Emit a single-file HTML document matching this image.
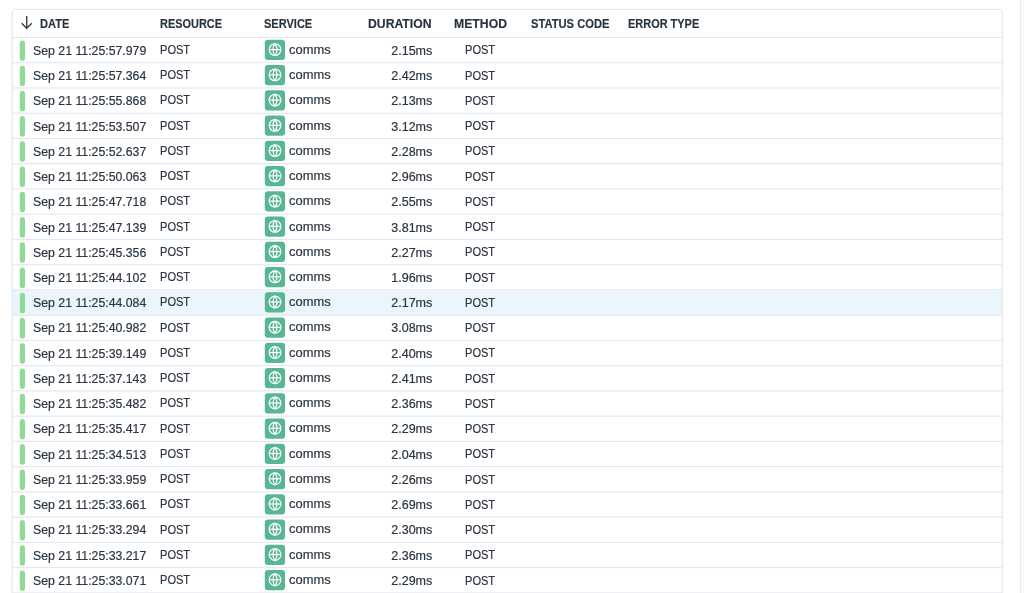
<!DOCTYPE html><html><head><meta charset="utf-8"><style>
html,body{margin:0;padding:0;background:#fff;width:1024px;height:593px;overflow:hidden;position:relative;font-family:"Liberation Sans",sans-serif;}
#wrap{position:absolute;left:0;top:0;width:1024px;height:593px;will-change:transform;}
.t{position:absolute;white-space:nowrap;font-size:12.3px;color:#2b3640;line-height:16px;transform-origin:0 0;-webkit-text-stroke:0.2px #2b3640;}
.r{transform-origin:100% 0;}
.h{position:absolute;white-space:nowrap;font-size:12.6px;color:#26333d;font-weight:bold;line-height:16px;transform-origin:0 0;-webkit-text-stroke:0.15px #26333d;}
.ic{position:absolute;left:265px;width:20px;height:20px;}
</style></head><body><div id="wrap">

<svg style="position:absolute;left:0;top:0" width="1024" height="593" viewBox="0 0 1024 593"><rect x="1020" y="0" width="1.1" height="593" fill="#e4e6ec"/><rect x="1021.1" y="0" width="2.9" height="593" fill="#f8f9fb"/><rect x="13" y="290.410" width="989.5" height="24.745" fill="#ebf5fc"/><rect x="12.2" y="9.3" width="990.2" height="620" rx="4" ry="4" fill="none" stroke="#e5e8ef" stroke-width="1.3"/><rect x="13" y="36.960" width="989.5" height="1.05" fill="#e3e6ee"/><rect x="13" y="62.205" width="989.5" height="1.05" fill="#e3e6ee"/><rect x="13" y="87.450" width="989.5" height="1.05" fill="#e3e6ee"/><rect x="13" y="112.695" width="989.5" height="1.05" fill="#e3e6ee"/><rect x="13" y="137.940" width="989.5" height="1.05" fill="#e3e6ee"/><rect x="13" y="163.185" width="989.5" height="1.05" fill="#e3e6ee"/><rect x="13" y="188.430" width="989.5" height="1.05" fill="#e3e6ee"/><rect x="13" y="213.675" width="989.5" height="1.05" fill="#e3e6ee"/><rect x="13" y="238.920" width="989.5" height="1.05" fill="#e3e6ee"/><rect x="13" y="264.165" width="989.5" height="1.05" fill="#e3e6ee"/><rect x="13" y="289.410" width="989.5" height="1.05" fill="#e3e6ee"/><rect x="13" y="314.655" width="989.5" height="1.05" fill="#e3e6ee"/><rect x="13" y="339.900" width="989.5" height="1.05" fill="#e3e6ee"/><rect x="13" y="365.145" width="989.5" height="1.05" fill="#e3e6ee"/><rect x="13" y="390.390" width="989.5" height="1.05" fill="#e3e6ee"/><rect x="13" y="415.635" width="989.5" height="1.05" fill="#e3e6ee"/><rect x="13" y="440.880" width="989.5" height="1.05" fill="#e3e6ee"/><rect x="13" y="466.125" width="989.5" height="1.05" fill="#e3e6ee"/><rect x="13" y="491.370" width="989.5" height="1.05" fill="#e3e6ee"/><rect x="13" y="516.615" width="989.5" height="1.05" fill="#e3e6ee"/><rect x="13" y="541.860" width="989.5" height="1.05" fill="#e3e6ee"/><rect x="13" y="567.105" width="989.5" height="1.05" fill="#e3e6ee"/><rect x="13" y="592.350" width="989.5" height="1.05" fill="#e3e6ee"/><rect x="19.8" y="40.383" width="5.2" height="20.4" rx="2.6" fill="#8fda99"/><rect x="19.8" y="65.627" width="5.2" height="20.4" rx="2.6" fill="#8fda99"/><rect x="19.8" y="90.873" width="5.2" height="20.4" rx="2.6" fill="#8fda99"/><rect x="19.8" y="116.117" width="5.2" height="20.4" rx="2.6" fill="#8fda99"/><rect x="19.8" y="141.363" width="5.2" height="20.4" rx="2.6" fill="#8fda99"/><rect x="19.8" y="166.608" width="5.2" height="20.4" rx="2.6" fill="#8fda99"/><rect x="19.8" y="191.853" width="5.2" height="20.4" rx="2.6" fill="#8fda99"/><rect x="19.8" y="217.098" width="5.2" height="20.4" rx="2.6" fill="#8fda99"/><rect x="19.8" y="242.343" width="5.2" height="20.4" rx="2.6" fill="#8fda99"/><rect x="19.8" y="267.588" width="5.2" height="20.4" rx="2.6" fill="#8fda99"/><rect x="19.8" y="292.833" width="5.2" height="20.4" rx="2.6" fill="#8fda99"/><rect x="19.8" y="318.077" width="5.2" height="20.4" rx="2.6" fill="#8fda99"/><rect x="19.8" y="343.322" width="5.2" height="20.4" rx="2.6" fill="#8fda99"/><rect x="19.8" y="368.567" width="5.2" height="20.4" rx="2.6" fill="#8fda99"/><rect x="19.8" y="393.812" width="5.2" height="20.4" rx="2.6" fill="#8fda99"/><rect x="19.8" y="419.058" width="5.2" height="20.4" rx="2.6" fill="#8fda99"/><rect x="19.8" y="444.303" width="5.2" height="20.4" rx="2.6" fill="#8fda99"/><rect x="19.8" y="469.548" width="5.2" height="20.4" rx="2.6" fill="#8fda99"/><rect x="19.8" y="494.793" width="5.2" height="20.4" rx="2.6" fill="#8fda99"/><rect x="19.8" y="520.037" width="5.2" height="20.4" rx="2.6" fill="#8fda99"/><rect x="19.8" y="545.282" width="5.2" height="20.4" rx="2.6" fill="#8fda99"/><rect x="19.8" y="570.527" width="5.2" height="20.4" rx="2.6" fill="#8fda99"/><g transform="translate(264.8,39.860)"><rect x="0" y="0" width="20.25" height="20.25" rx="3.3" fill="#59b692"/><g fill="none" stroke="#fff" stroke-width="1.2"><circle cx="10.2" cy="9.75" r="5.85"/><line x1="4.3" y1="9.75" x2="16.1" y2="9.75"/><path d="M10.2 3.9 C7.6 6.7 7.6 12.8 10.2 15.6 C12.8 12.8 12.8 6.7 10.2 3.9Z"/></g></g><g transform="translate(264.8,65.105)"><rect x="0" y="0" width="20.25" height="20.25" rx="3.3" fill="#59b692"/><g fill="none" stroke="#fff" stroke-width="1.2"><circle cx="10.2" cy="9.75" r="5.85"/><line x1="4.3" y1="9.75" x2="16.1" y2="9.75"/><path d="M10.2 3.9 C7.6 6.7 7.6 12.8 10.2 15.6 C12.8 12.8 12.8 6.7 10.2 3.9Z"/></g></g><g transform="translate(264.8,90.350)"><rect x="0" y="0" width="20.25" height="20.25" rx="3.3" fill="#59b692"/><g fill="none" stroke="#fff" stroke-width="1.2"><circle cx="10.2" cy="9.75" r="5.85"/><line x1="4.3" y1="9.75" x2="16.1" y2="9.75"/><path d="M10.2 3.9 C7.6 6.7 7.6 12.8 10.2 15.6 C12.8 12.8 12.8 6.7 10.2 3.9Z"/></g></g><g transform="translate(264.8,115.595)"><rect x="0" y="0" width="20.25" height="20.25" rx="3.3" fill="#59b692"/><g fill="none" stroke="#fff" stroke-width="1.2"><circle cx="10.2" cy="9.75" r="5.85"/><line x1="4.3" y1="9.75" x2="16.1" y2="9.75"/><path d="M10.2 3.9 C7.6 6.7 7.6 12.8 10.2 15.6 C12.8 12.8 12.8 6.7 10.2 3.9Z"/></g></g><g transform="translate(264.8,140.840)"><rect x="0" y="0" width="20.25" height="20.25" rx="3.3" fill="#59b692"/><g fill="none" stroke="#fff" stroke-width="1.2"><circle cx="10.2" cy="9.75" r="5.85"/><line x1="4.3" y1="9.75" x2="16.1" y2="9.75"/><path d="M10.2 3.9 C7.6 6.7 7.6 12.8 10.2 15.6 C12.8 12.8 12.8 6.7 10.2 3.9Z"/></g></g><g transform="translate(264.8,166.085)"><rect x="0" y="0" width="20.25" height="20.25" rx="3.3" fill="#59b692"/><g fill="none" stroke="#fff" stroke-width="1.2"><circle cx="10.2" cy="9.75" r="5.85"/><line x1="4.3" y1="9.75" x2="16.1" y2="9.75"/><path d="M10.2 3.9 C7.6 6.7 7.6 12.8 10.2 15.6 C12.8 12.8 12.8 6.7 10.2 3.9Z"/></g></g><g transform="translate(264.8,191.330)"><rect x="0" y="0" width="20.25" height="20.25" rx="3.3" fill="#59b692"/><g fill="none" stroke="#fff" stroke-width="1.2"><circle cx="10.2" cy="9.75" r="5.85"/><line x1="4.3" y1="9.75" x2="16.1" y2="9.75"/><path d="M10.2 3.9 C7.6 6.7 7.6 12.8 10.2 15.6 C12.8 12.8 12.8 6.7 10.2 3.9Z"/></g></g><g transform="translate(264.8,216.575)"><rect x="0" y="0" width="20.25" height="20.25" rx="3.3" fill="#59b692"/><g fill="none" stroke="#fff" stroke-width="1.2"><circle cx="10.2" cy="9.75" r="5.85"/><line x1="4.3" y1="9.75" x2="16.1" y2="9.75"/><path d="M10.2 3.9 C7.6 6.7 7.6 12.8 10.2 15.6 C12.8 12.8 12.8 6.7 10.2 3.9Z"/></g></g><g transform="translate(264.8,241.820)"><rect x="0" y="0" width="20.25" height="20.25" rx="3.3" fill="#59b692"/><g fill="none" stroke="#fff" stroke-width="1.2"><circle cx="10.2" cy="9.75" r="5.85"/><line x1="4.3" y1="9.75" x2="16.1" y2="9.75"/><path d="M10.2 3.9 C7.6 6.7 7.6 12.8 10.2 15.6 C12.8 12.8 12.8 6.7 10.2 3.9Z"/></g></g><g transform="translate(264.8,267.065)"><rect x="0" y="0" width="20.25" height="20.25" rx="3.3" fill="#59b692"/><g fill="none" stroke="#fff" stroke-width="1.2"><circle cx="10.2" cy="9.75" r="5.85"/><line x1="4.3" y1="9.75" x2="16.1" y2="9.75"/><path d="M10.2 3.9 C7.6 6.7 7.6 12.8 10.2 15.6 C12.8 12.8 12.8 6.7 10.2 3.9Z"/></g></g><g transform="translate(264.8,292.310)"><rect x="0" y="0" width="20.25" height="20.25" rx="3.3" fill="#59b692"/><g fill="none" stroke="#fff" stroke-width="1.2"><circle cx="10.2" cy="9.75" r="5.85"/><line x1="4.3" y1="9.75" x2="16.1" y2="9.75"/><path d="M10.2 3.9 C7.6 6.7 7.6 12.8 10.2 15.6 C12.8 12.8 12.8 6.7 10.2 3.9Z"/></g></g><g transform="translate(264.8,317.555)"><rect x="0" y="0" width="20.25" height="20.25" rx="3.3" fill="#59b692"/><g fill="none" stroke="#fff" stroke-width="1.2"><circle cx="10.2" cy="9.75" r="5.85"/><line x1="4.3" y1="9.75" x2="16.1" y2="9.75"/><path d="M10.2 3.9 C7.6 6.7 7.6 12.8 10.2 15.6 C12.8 12.8 12.8 6.7 10.2 3.9Z"/></g></g><g transform="translate(264.8,342.800)"><rect x="0" y="0" width="20.25" height="20.25" rx="3.3" fill="#59b692"/><g fill="none" stroke="#fff" stroke-width="1.2"><circle cx="10.2" cy="9.75" r="5.85"/><line x1="4.3" y1="9.75" x2="16.1" y2="9.75"/><path d="M10.2 3.9 C7.6 6.7 7.6 12.8 10.2 15.6 C12.8 12.8 12.8 6.7 10.2 3.9Z"/></g></g><g transform="translate(264.8,368.045)"><rect x="0" y="0" width="20.25" height="20.25" rx="3.3" fill="#59b692"/><g fill="none" stroke="#fff" stroke-width="1.2"><circle cx="10.2" cy="9.75" r="5.85"/><line x1="4.3" y1="9.75" x2="16.1" y2="9.75"/><path d="M10.2 3.9 C7.6 6.7 7.6 12.8 10.2 15.6 C12.8 12.8 12.8 6.7 10.2 3.9Z"/></g></g><g transform="translate(264.8,393.290)"><rect x="0" y="0" width="20.25" height="20.25" rx="3.3" fill="#59b692"/><g fill="none" stroke="#fff" stroke-width="1.2"><circle cx="10.2" cy="9.75" r="5.85"/><line x1="4.3" y1="9.75" x2="16.1" y2="9.75"/><path d="M10.2 3.9 C7.6 6.7 7.6 12.8 10.2 15.6 C12.8 12.8 12.8 6.7 10.2 3.9Z"/></g></g><g transform="translate(264.8,418.535)"><rect x="0" y="0" width="20.25" height="20.25" rx="3.3" fill="#59b692"/><g fill="none" stroke="#fff" stroke-width="1.2"><circle cx="10.2" cy="9.75" r="5.85"/><line x1="4.3" y1="9.75" x2="16.1" y2="9.75"/><path d="M10.2 3.9 C7.6 6.7 7.6 12.8 10.2 15.6 C12.8 12.8 12.8 6.7 10.2 3.9Z"/></g></g><g transform="translate(264.8,443.780)"><rect x="0" y="0" width="20.25" height="20.25" rx="3.3" fill="#59b692"/><g fill="none" stroke="#fff" stroke-width="1.2"><circle cx="10.2" cy="9.75" r="5.85"/><line x1="4.3" y1="9.75" x2="16.1" y2="9.75"/><path d="M10.2 3.9 C7.6 6.7 7.6 12.8 10.2 15.6 C12.8 12.8 12.8 6.7 10.2 3.9Z"/></g></g><g transform="translate(264.8,469.025)"><rect x="0" y="0" width="20.25" height="20.25" rx="3.3" fill="#59b692"/><g fill="none" stroke="#fff" stroke-width="1.2"><circle cx="10.2" cy="9.75" r="5.85"/><line x1="4.3" y1="9.75" x2="16.1" y2="9.75"/><path d="M10.2 3.9 C7.6 6.7 7.6 12.8 10.2 15.6 C12.8 12.8 12.8 6.7 10.2 3.9Z"/></g></g><g transform="translate(264.8,494.270)"><rect x="0" y="0" width="20.25" height="20.25" rx="3.3" fill="#59b692"/><g fill="none" stroke="#fff" stroke-width="1.2"><circle cx="10.2" cy="9.75" r="5.85"/><line x1="4.3" y1="9.75" x2="16.1" y2="9.75"/><path d="M10.2 3.9 C7.6 6.7 7.6 12.8 10.2 15.6 C12.8 12.8 12.8 6.7 10.2 3.9Z"/></g></g><g transform="translate(264.8,519.515)"><rect x="0" y="0" width="20.25" height="20.25" rx="3.3" fill="#59b692"/><g fill="none" stroke="#fff" stroke-width="1.2"><circle cx="10.2" cy="9.75" r="5.85"/><line x1="4.3" y1="9.75" x2="16.1" y2="9.75"/><path d="M10.2 3.9 C7.6 6.7 7.6 12.8 10.2 15.6 C12.8 12.8 12.8 6.7 10.2 3.9Z"/></g></g><g transform="translate(264.8,544.760)"><rect x="0" y="0" width="20.25" height="20.25" rx="3.3" fill="#59b692"/><g fill="none" stroke="#fff" stroke-width="1.2"><circle cx="10.2" cy="9.75" r="5.85"/><line x1="4.3" y1="9.75" x2="16.1" y2="9.75"/><path d="M10.2 3.9 C7.6 6.7 7.6 12.8 10.2 15.6 C12.8 12.8 12.8 6.7 10.2 3.9Z"/></g></g><g transform="translate(264.8,570.005)"><rect x="0" y="0" width="20.25" height="20.25" rx="3.3" fill="#59b692"/><g fill="none" stroke="#fff" stroke-width="1.2"><circle cx="10.2" cy="9.75" r="5.85"/><line x1="4.3" y1="9.75" x2="16.1" y2="9.75"/><path d="M10.2 3.9 C7.6 6.7 7.6 12.8 10.2 15.6 C12.8 12.8 12.8 6.7 10.2 3.9Z"/></g></g></svg>
<svg style="position:absolute;left:20px;top:15px" width="14" height="15" viewBox="0 0 14 15"><g fill="none" stroke="#333f49" stroke-width="1.4"><line x1="6.7" y1="1" x2="6.7" y2="13.5"/><polyline points="1.6,8.3 6.7,13.3 11.8,8.3"/></g></svg>
<div class="h" style="left:39.7px;top:15.6px;transform:scaleX(0.880)">DATE</div>
<div class="h" style="left:159.8px;top:15.6px;transform:scaleX(0.869)">RESOURCE</div>
<div class="h" style="left:263.9px;top:15.6px;transform:scaleX(0.876)">SERVICE</div>
<div class="h" style="left:368.4px;top:15.6px;transform:scaleX(0.969)">DURATION</div>
<div class="h" style="left:453.8px;top:15.6px;transform:scaleX(0.972)">METHOD</div>
<div class="h" style="left:530.8px;top:15.6px;transform:scaleX(0.887)">STATUS CODE</div>
<div class="h" style="left:627.9px;top:15.6px;transform:scaleX(0.870)">ERROR TYPE</div>
<div class="t" style="left:33px;top:42.78px;transform:scaleX(1.000)">Sep 21 11:25:57.979</div>
<div class="t" style="left:160.4px;top:41.88px;transform:scaleX(0.900)">POST</div>
<div class="t" style="left:289px;top:41.78px;transform:scaleX(1.050)">comms</div>
<div class="t r" style="right:591.8px;top:42.78px;transform:scaleX(1.020)">2.15ms</div>
<div class="t" style="left:464.6px;top:42.48px;transform:scaleX(0.900)">POST</div>
<div class="t" style="left:33px;top:68.03px;transform:scaleX(1.000)">Sep 21 11:25:57.364</div>
<div class="t" style="left:160.4px;top:67.13px;transform:scaleX(0.900)">POST</div>
<div class="t" style="left:289px;top:67.03px;transform:scaleX(1.050)">comms</div>
<div class="t r" style="right:591.8px;top:68.03px;transform:scaleX(1.020)">2.42ms</div>
<div class="t" style="left:464.6px;top:67.73px;transform:scaleX(0.900)">POST</div>
<div class="t" style="left:33px;top:93.27px;transform:scaleX(1.000)">Sep 21 11:25:55.868</div>
<div class="t" style="left:160.4px;top:92.37px;transform:scaleX(0.900)">POST</div>
<div class="t" style="left:289px;top:92.27px;transform:scaleX(1.050)">comms</div>
<div class="t r" style="right:591.8px;top:93.27px;transform:scaleX(1.020)">2.13ms</div>
<div class="t" style="left:464.6px;top:92.97px;transform:scaleX(0.900)">POST</div>
<div class="t" style="left:33px;top:118.52px;transform:scaleX(1.000)">Sep 21 11:25:53.507</div>
<div class="t" style="left:160.4px;top:117.62px;transform:scaleX(0.900)">POST</div>
<div class="t" style="left:289px;top:117.52px;transform:scaleX(1.050)">comms</div>
<div class="t r" style="right:591.8px;top:118.52px;transform:scaleX(1.020)">3.12ms</div>
<div class="t" style="left:464.6px;top:118.22px;transform:scaleX(0.900)">POST</div>
<div class="t" style="left:33px;top:143.76px;transform:scaleX(1.000)">Sep 21 11:25:52.637</div>
<div class="t" style="left:160.4px;top:142.86px;transform:scaleX(0.900)">POST</div>
<div class="t" style="left:289px;top:142.76px;transform:scaleX(1.050)">comms</div>
<div class="t r" style="right:591.8px;top:143.76px;transform:scaleX(1.020)">2.28ms</div>
<div class="t" style="left:464.6px;top:143.46px;transform:scaleX(0.900)">POST</div>
<div class="t" style="left:33px;top:169.01px;transform:scaleX(1.000)">Sep 21 11:25:50.063</div>
<div class="t" style="left:160.4px;top:168.11px;transform:scaleX(0.900)">POST</div>
<div class="t" style="left:289px;top:168.01px;transform:scaleX(1.050)">comms</div>
<div class="t r" style="right:591.8px;top:169.01px;transform:scaleX(1.020)">2.96ms</div>
<div class="t" style="left:464.6px;top:168.71px;transform:scaleX(0.900)">POST</div>
<div class="t" style="left:33px;top:194.25px;transform:scaleX(1.000)">Sep 21 11:25:47.718</div>
<div class="t" style="left:160.4px;top:193.35px;transform:scaleX(0.900)">POST</div>
<div class="t" style="left:289px;top:193.25px;transform:scaleX(1.050)">comms</div>
<div class="t r" style="right:591.8px;top:194.25px;transform:scaleX(1.020)">2.55ms</div>
<div class="t" style="left:464.6px;top:193.95px;transform:scaleX(0.900)">POST</div>
<div class="t" style="left:33px;top:219.50px;transform:scaleX(1.000)">Sep 21 11:25:47.139</div>
<div class="t" style="left:160.4px;top:218.60px;transform:scaleX(0.900)">POST</div>
<div class="t" style="left:289px;top:218.50px;transform:scaleX(1.050)">comms</div>
<div class="t r" style="right:591.8px;top:219.50px;transform:scaleX(1.020)">3.81ms</div>
<div class="t" style="left:464.6px;top:219.20px;transform:scaleX(0.900)">POST</div>
<div class="t" style="left:33px;top:244.74px;transform:scaleX(1.000)">Sep 21 11:25:45.356</div>
<div class="t" style="left:160.4px;top:243.84px;transform:scaleX(0.900)">POST</div>
<div class="t" style="left:289px;top:243.74px;transform:scaleX(1.050)">comms</div>
<div class="t r" style="right:591.8px;top:244.74px;transform:scaleX(1.020)">2.27ms</div>
<div class="t" style="left:464.6px;top:244.44px;transform:scaleX(0.900)">POST</div>
<div class="t" style="left:33px;top:269.99px;transform:scaleX(1.000)">Sep 21 11:25:44.102</div>
<div class="t" style="left:160.4px;top:269.09px;transform:scaleX(0.900)">POST</div>
<div class="t" style="left:289px;top:268.99px;transform:scaleX(1.050)">comms</div>
<div class="t r" style="right:591.8px;top:269.99px;transform:scaleX(1.020)">1.96ms</div>
<div class="t" style="left:464.6px;top:269.69px;transform:scaleX(0.900)">POST</div>
<div class="t" style="left:33px;top:295.23px;transform:scaleX(1.000)">Sep 21 11:25:44.084</div>
<div class="t" style="left:160.4px;top:294.33px;transform:scaleX(0.900)">POST</div>
<div class="t" style="left:289px;top:294.23px;transform:scaleX(1.050)">comms</div>
<div class="t r" style="right:591.8px;top:295.23px;transform:scaleX(1.020)">2.17ms</div>
<div class="t" style="left:464.6px;top:294.93px;transform:scaleX(0.900)">POST</div>
<div class="t" style="left:33px;top:320.48px;transform:scaleX(1.000)">Sep 21 11:25:40.982</div>
<div class="t" style="left:160.4px;top:319.58px;transform:scaleX(0.900)">POST</div>
<div class="t" style="left:289px;top:319.48px;transform:scaleX(1.050)">comms</div>
<div class="t r" style="right:591.8px;top:320.48px;transform:scaleX(1.020)">3.08ms</div>
<div class="t" style="left:464.6px;top:320.18px;transform:scaleX(0.900)">POST</div>
<div class="t" style="left:33px;top:345.72px;transform:scaleX(1.000)">Sep 21 11:25:39.149</div>
<div class="t" style="left:160.4px;top:344.82px;transform:scaleX(0.900)">POST</div>
<div class="t" style="left:289px;top:344.72px;transform:scaleX(1.050)">comms</div>
<div class="t r" style="right:591.8px;top:345.72px;transform:scaleX(1.020)">2.40ms</div>
<div class="t" style="left:464.6px;top:345.42px;transform:scaleX(0.900)">POST</div>
<div class="t" style="left:33px;top:370.97px;transform:scaleX(1.000)">Sep 21 11:25:37.143</div>
<div class="t" style="left:160.4px;top:370.07px;transform:scaleX(0.900)">POST</div>
<div class="t" style="left:289px;top:369.97px;transform:scaleX(1.050)">comms</div>
<div class="t r" style="right:591.8px;top:370.97px;transform:scaleX(1.020)">2.41ms</div>
<div class="t" style="left:464.6px;top:370.67px;transform:scaleX(0.900)">POST</div>
<div class="t" style="left:33px;top:396.21px;transform:scaleX(1.000)">Sep 21 11:25:35.482</div>
<div class="t" style="left:160.4px;top:395.31px;transform:scaleX(0.900)">POST</div>
<div class="t" style="left:289px;top:395.21px;transform:scaleX(1.050)">comms</div>
<div class="t r" style="right:591.8px;top:396.21px;transform:scaleX(1.020)">2.36ms</div>
<div class="t" style="left:464.6px;top:395.91px;transform:scaleX(0.900)">POST</div>
<div class="t" style="left:33px;top:421.46px;transform:scaleX(1.000)">Sep 21 11:25:35.417</div>
<div class="t" style="left:160.4px;top:420.56px;transform:scaleX(0.900)">POST</div>
<div class="t" style="left:289px;top:420.46px;transform:scaleX(1.050)">comms</div>
<div class="t r" style="right:591.8px;top:421.46px;transform:scaleX(1.020)">2.29ms</div>
<div class="t" style="left:464.6px;top:421.16px;transform:scaleX(0.900)">POST</div>
<div class="t" style="left:33px;top:446.70px;transform:scaleX(1.000)">Sep 21 11:25:34.513</div>
<div class="t" style="left:160.4px;top:445.80px;transform:scaleX(0.900)">POST</div>
<div class="t" style="left:289px;top:445.70px;transform:scaleX(1.050)">comms</div>
<div class="t r" style="right:591.8px;top:446.70px;transform:scaleX(1.020)">2.04ms</div>
<div class="t" style="left:464.6px;top:446.40px;transform:scaleX(0.900)">POST</div>
<div class="t" style="left:33px;top:471.95px;transform:scaleX(1.000)">Sep 21 11:25:33.959</div>
<div class="t" style="left:160.4px;top:471.05px;transform:scaleX(0.900)">POST</div>
<div class="t" style="left:289px;top:470.95px;transform:scaleX(1.050)">comms</div>
<div class="t r" style="right:591.8px;top:471.95px;transform:scaleX(1.020)">2.26ms</div>
<div class="t" style="left:464.6px;top:471.65px;transform:scaleX(0.900)">POST</div>
<div class="t" style="left:33px;top:497.19px;transform:scaleX(1.000)">Sep 21 11:25:33.661</div>
<div class="t" style="left:160.4px;top:496.29px;transform:scaleX(0.900)">POST</div>
<div class="t" style="left:289px;top:496.19px;transform:scaleX(1.050)">comms</div>
<div class="t r" style="right:591.8px;top:497.19px;transform:scaleX(1.020)">2.69ms</div>
<div class="t" style="left:464.6px;top:496.89px;transform:scaleX(0.900)">POST</div>
<div class="t" style="left:33px;top:522.44px;transform:scaleX(1.000)">Sep 21 11:25:33.294</div>
<div class="t" style="left:160.4px;top:521.54px;transform:scaleX(0.900)">POST</div>
<div class="t" style="left:289px;top:521.44px;transform:scaleX(1.050)">comms</div>
<div class="t r" style="right:591.8px;top:522.44px;transform:scaleX(1.020)">2.30ms</div>
<div class="t" style="left:464.6px;top:522.14px;transform:scaleX(0.900)">POST</div>
<div class="t" style="left:33px;top:547.68px;transform:scaleX(1.000)">Sep 21 11:25:33.217</div>
<div class="t" style="left:160.4px;top:546.78px;transform:scaleX(0.900)">POST</div>
<div class="t" style="left:289px;top:546.68px;transform:scaleX(1.050)">comms</div>
<div class="t r" style="right:591.8px;top:547.68px;transform:scaleX(1.020)">2.36ms</div>
<div class="t" style="left:464.6px;top:547.38px;transform:scaleX(0.900)">POST</div>
<div class="t" style="left:33px;top:572.93px;transform:scaleX(1.000)">Sep 21 11:25:33.071</div>
<div class="t" style="left:160.4px;top:572.03px;transform:scaleX(0.900)">POST</div>
<div class="t" style="left:289px;top:571.93px;transform:scaleX(1.050)">comms</div>
<div class="t r" style="right:591.8px;top:572.93px;transform:scaleX(1.020)">2.29ms</div>
<div class="t" style="left:464.6px;top:572.63px;transform:scaleX(0.900)">POST</div>
</div></body></html>
